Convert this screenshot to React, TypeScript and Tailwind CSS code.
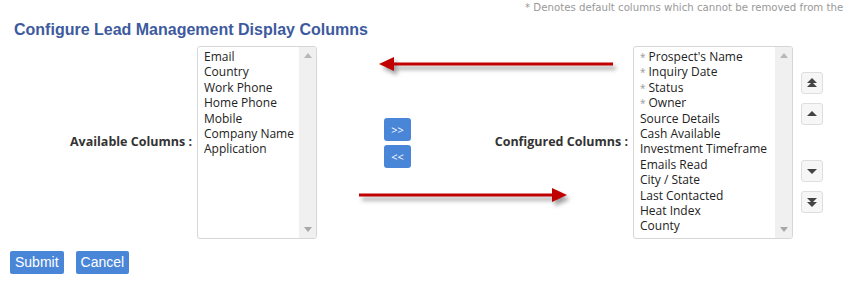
import React from 'react';

const available = ['Email', 'Country', 'Work Phone', 'Home Phone', 'Mobile', 'Company Name', 'Application'];

const configured: { name: string; required?: boolean }[] = [
  { name: "Prospect's Name", required: true },
  { name: 'Inquiry Date', required: true },
  { name: 'Status', required: true },
  { name: 'Owner', required: true },
  { name: 'Source Details' },
  { name: 'Cash Available' },
  { name: 'Investment Timeframe' },
  { name: 'Emails Read' },
  { name: 'City / State' },
  { name: 'Last Contacted' },
  { name: 'Heat Index' },
  { name: 'County' },
];

const ScrollTrack: React.FC = () => (
  <div className="w-[17px] bg-[#f0f0f0] flex flex-col items-center justify-between py-[6px]">
    <svg width="8" height="5" viewBox="0 0 8 5">
      <polygon points="4,0 8,5 0,5" fill="#b8b8b8" />
    </svg>
    <svg width="8" height="5" viewBox="0 0 8 5">
      <polygon points="0,0 8,0 4,5" fill="#a8a8a8" />
    </svg>
  </div>
);

const MoveButton: React.FC<{ dir: 'top' | 'up' | 'down' | 'bottom' }> = ({ dir }) => (
  <button className="w-[22px] h-[22px] flex items-center justify-center bg-[#f6f6f6] border border-[#dedede] rounded-[3px]">
    <svg width="12" height="12" viewBox="0 0 12 12">
      {dir === 'top' && (
        <>
          <polygon points="6,1 11,6 1,6" fill="#444" />
          <polygon points="6,5 11,10 1,10" fill="#444" />
        </>
      )}
      {dir === 'up' && <polygon points="6,3 11,8 1,8" fill="#444" />}
      {dir === 'down' && <polygon points="1,4 11,4 6,9" fill="#444" />}
      {dir === 'bottom' && (
        <>
          <polygon points="1,2 11,2 6,7" fill="#444" />
          <polygon points="1,6 11,6 6,11" fill="#444" />
        </>
      )}
    </svg>
  </button>
);

const RedArrow: React.FC<{ left: boolean }> = ({ left }) => (
  <svg
    width="250"
    height="24"
    viewBox="0 0 250 24"
    className="drop-shadow-[3px_4px_2px_rgba(0,0,0,0.38)]"
  >
    {left ? (
      <>
        <rect x="12" y="8.5" width="222" height="3" fill="#c00000" />
        <polygon points="0,10 15,3 15,17" fill="#c00000" />
      </>
    ) : (
      <>
        <rect x="0" y="8.5" width="196" height="3" fill="#c00000" />
        <polygon points="208,10 193,3 193,17" fill="#c00000" />
      </>
    )}
  </svg>
);

export default function App() {
  return (
    <div className="relative w-[859px] h-[288px] overflow-hidden bg-white font-['Open_Sans',sans-serif]">
      {/* note */}
      <div className="h-[17px] pl-[525px] whitespace-nowrap text-[10.2px] leading-[17px] text-[#999] font-['DejaVu_Sans',sans-serif] -mt-[1px]">
        * Denotes default columns which cannot be removed from the
      </div>

      <h1 className="pl-[14px] mt-[3px] text-[16px] leading-[22px] font-bold text-[#3d5a9e] font-['Liberation_Sans',Arial,sans-serif]">
        Configure Lead Management Display Columns
      </h1>

      {/* columns row */}
      <div className="flex items-center mt-[5px]">
        <div className="w-[192px] text-right text-[12.5px] font-bold text-[#333]">Available Columns :</div>

        <div className="ml-[5px] w-[120px] h-[193px] border border-[#d6d6d6] rounded-[3px] flex overflow-hidden">
          <ul className="flex-1 pl-[6px] pt-[2px] text-[12px] leading-[15.4px] text-[#222]">
            {available.map((item) => (
              <li key={item} className="h-[15.4px]">{item}</li>
            ))}
          </ul>
          <ScrollTrack />
        </div>

        <div className="ml-[67px] flex flex-col gap-[4px]">
          <button className="w-[27px] h-[23px] bg-[#4a86d8] rounded-[3px] text-white text-[11px] leading-[23px]">&gt;&gt;</button>
          <button className="w-[27px] h-[23px] bg-[#4a86d8] rounded-[3px] text-white text-[11px] leading-[23px]">&lt;&lt;</button>
        </div>

        <div className="w-[217px] text-right text-[12.5px] font-bold text-[#333]">Configured Columns :</div>

        <div className="ml-[5px] w-[160px] h-[193px] border border-[#d6d6d6] rounded-[3px] flex overflow-hidden">
          <ul className="flex-1 pl-[6px] pt-[2px] text-[12px] leading-[15.4px] text-[#222] whitespace-nowrap">
            {configured.map((item) => (
              <li key={item.name} className="h-[15.4px]">
                {item.required && <span className="text-[#999] text-[10px] leading-[0] mr-[3px]">*</span>}
                {item.name}
              </li>
            ))}
          </ul>
          <ScrollTrack />
        </div>

        <div className="ml-[8px] flex flex-col">
          <MoveButton dir="top" />
          <div className="mt-[9px]">
            <MoveButton dir="up" />
          </div>
          <div className="mt-[35px]">
            <MoveButton dir="down" />
          </div>
          <div className="mt-[9px]">
            <MoveButton dir="bottom" />
          </div>
        </div>
      </div>

      {/* actions */}
      <div className="flex gap-[12px] pl-[10px] mt-[12px]">
        <button className="h-[23px] px-[5px] bg-[#4a86d8] rounded-[2px] text-white text-[14px] font-['Liberation_Sans',Arial,sans-serif]">
          Submit
        </button>
        <button className="h-[23px] px-[5px] bg-[#4a86d8] rounded-[2px] text-white text-[14px] font-['Liberation_Sans',Arial,sans-serif]">
          Cancel
        </button>
      </div>

      {/* annotation arrows */}
      <div className="absolute left-[379px] top-[54px]">
        <RedArrow left />
      </div>
      <div className="absolute left-[359px] top-[185px]">
        <RedArrow left={false} />
      </div>
    </div>
  );
}
